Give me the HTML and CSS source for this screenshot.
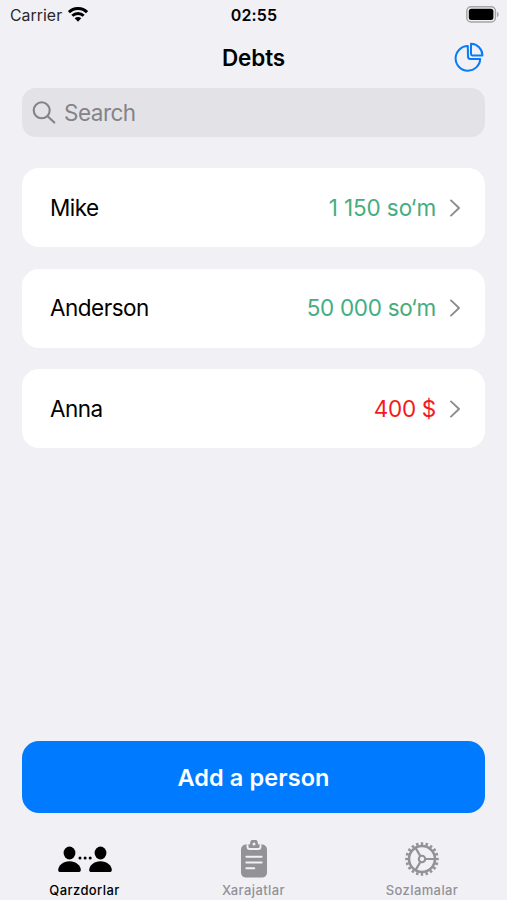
FILE: index.html
```html
<!DOCTYPE html>
<html lang="uz">
<head>
<meta charset="utf-8">
<meta name="viewport" content="width=device-width, initial-scale=1">
<title>Debts</title>
<link rel="stylesheet" href="styles.css">
</head>
<body>
<div class="app">
  <header class="status">
    <div class="carrier"><span>Carrier</span>
      <svg class="wifi" viewBox="0 0 20 15" width="20" height="15"><g fill="none" stroke="#000" stroke-width="2.9"><path d="M.9 5.2a12.9 12.9 0 0 1 18.2 0"/><path d="M4.3 8.8a8.1 8.1 0 0 1 11.4 0"/></g><path d="M6.7 11.3a4.7 4.7 0 0 1 6.6 0L10 14.7Z"/></svg>
    </div>
    <time class="clock">02:55</time>
    <svg class="battery" viewBox="0 0 33 17" width="33" height="17"><rect x=".8" y=".8" width="28.6" height="15.2" rx="4.2" fill="none" stroke="#a5a5a8" stroke-width="1.4"/><rect x="2.8" y="2.8" width="24.6" height="11.2" rx="2.5"/><path d="M31 5.8c2.2.8 2.2 4.4 0 5.2Z" fill="#a5a5a8"/></svg>
  </header>
  <nav class="navbar">
    <h1 class="title">Debts</h1>
    <button class="chart" aria-label="Statistics"><svg viewBox="0 0 30 30" width="30" height="30" fill="none" stroke="#087cf8" stroke-width="2" stroke-linejoin="round"><path d="M13.8 4.1a12.3 12.3 0 1 0 12.4 12.8h-9.8a2.4 2.4 0 0 1-2.4-2.4Z"/><path d="M17 1.8a11.7 11.7 0 0 1 11.4 11.6H18.4A1.4 1.4 0 0 1 17 12Z"/></svg></button>
  </nav>
  <div class="search">
    <svg viewBox="0 0 24 24" width="24" height="24" fill="none" stroke="#838388" stroke-width="2.1" stroke-linecap="round"><circle cx="9.7" cy="9.3" r="8"/><path d="m15.6 15.2 6.700 6.400"/></svg>
    <span>Search</span>
  </div>
  <main class="list">
    <article class="card"><span class="name">Mike</span><span class="amount first">1 150 so‘m</span><svg class="chevron" viewBox="0 0 10 18" width="10" height="18"><path d="m1 1.4 8 7.6-8 7.6"/></svg></article>
    <article class="card"><span class="name">Anderson</span><span class="amount">50 000 so‘m</span><svg class="chevron" viewBox="0 0 10 18" width="10" height="18"><path d="m1 1.4 8 7.6-8 7.6"/></svg></article>
    <article class="card"><span class="name">Anna</span><span class="amount owed">400 $</span><svg class="chevron" viewBox="0 0 10 18" width="10" height="18"><path d="m1 1.4 8 7.6-8 7.6"/></svg></article>
  </main>
  <button class="add">Add a person</button>
  <footer class="tabs">
    <a class="tab active"><svg viewBox="0 0 56 40" width="56" height="40"><g fill="currentColor"><ellipse cx="12.500" cy="13" rx="5.9" ry="6.4"/><path d="M1.200 30c0-4.500 5-8.700 11.300-8.700S23.800 25.500 23.800 30c0 1.400-.8 2-2.200 2H3.400c-1.400 0-2.200-.6-2.200-2Z"/><ellipse cx="43.500" cy="13" rx="5.9" ry="6.4"/><path d="M32.200 30c0-4.500 5-8.700 11.300-8.700S54.800 25.500 54.800 30c0 1.400-.8 2-2.200 2H34.400c-1.400 0-2.200-.6-2.200-2Z"/><circle cx="23" cy="18" r="1.500"/><circle cx="28.100" cy="18" r="1.500"/><circle cx="33.200" cy="18" r="1.500"/></g></svg><span>Qarzdorlar</span></a>
    <a class="tab"><svg viewBox="0 0 30 40" width="30" height="40"><path fill="currentColor" d="M7 4.500h3c.6 0 1.100-.5 1.100-1.100a3.900 3.900 0 0 1 7.800 0c0 .6.500 1.100 1.100 1.100h3a5 5 0 0 1 5 5v23.100a5 5 0 0 1-5 5H7a5 5 0 0 1-5-5V9.500a5 5 0 0 1 5-5Z"/><path d="M8.500 5.300v1.400c0 1.600.8 2.300 2.300 2.300h8.400c1.500 0 2.300-.7 2.300-2.300V5.300M7.300 16.700h15.400M7.300 22.500h15.400M7.300 28.300h8" fill="none" stroke="#f1f0f5" stroke-width="1.900" stroke-linecap="round"/><circle cx="15" cy="4" r="1.500" fill="#f1f0f5"/></svg><span>Xarajatlar</span></a>
    <a class="tab last"><svg viewBox="0 0 36 40" width="36" height="40"><g fill="none" stroke="currentColor"><circle cx="18" cy="19" r="15.300" stroke-width="3" pathLength="100" stroke-dasharray="2.500 2.500" stroke-dashoffset="1.250"/><circle cx="18" cy="19" r="13" stroke-width="2.600"/><circle cx="18" cy="19" r="3.200" stroke-width="2.100"/><path d="M21 19h10.300M16.500 16.400l-5.200-9M16.500 21.600l-5.200 9" stroke-width="2.200"/></g></svg><span>Sozlamalar</span></a>
  </footer>
</div>
</body>
</html>
```
FILE: styles.css
```css
* { box-sizing: border-box; }
body { margin: 0; background: #f1f0f5; color: #000; font-family: Inter, "Liberation Sans", sans-serif; }
button { border: 0; padding: 0; font: inherit; }
svg { display: block; flex: none; }
.app { height: 900px; display: flex; flex-direction: column; overflow: hidden; }
.status { height: 30px; display: grid; grid-template-columns: 1fr auto 1fr; align-items: center; padding: 0 8px 1px 10px; }
.carrier { display: flex; align-items: center; gap: 6px; font-size: 15.800px; letter-spacing: .05px; color: #28282a; }
.carrier span { padding-top: 1px; }
.wifi { margin-top: -1px; }
.clock { font-size: 16px; font-weight: 600; letter-spacing: .2px; margin-right: 1px; }
.battery { justify-self: end; margin-top: -1px; }
.navbar { height: 58px; display: grid; grid-template-columns: 1fr auto 1fr; align-items: center; padding: 0 23px; }
.title { grid-column: 2; margin: -3px 0 0; font-size: 22.500px; font-weight: 600; letter-spacing: -.1px; }
.chart { justify-self: end; background: none; margin-top: -4px; }
.search { height: 49px; margin: 0 22px; padding-left: 10px; display: flex; align-items: center; gap: 8px; border-radius: 14px; background: #e3e2e7; color: #838388; font-size: 22.500px; letter-spacing: -.5px; }
.list { flex: 1; display: flex; flex-direction: column; gap: 21.500px; padding: 31px 22px 0; }
.card { height: 79px; flex: none; display: flex; align-items: center; padding: 0 25px 0 28px; border-radius: 17px; background: #fff; font-size: 22.500px; }
.card span { margin-top: -1px; }
.name { letter-spacing: -.5px; }
.amount { margin-left: auto; color: #45ad7e; letter-spacing: -.3px; }
.first { letter-spacing: -.1px; }
.owed { color: #f5191f; }
.chevron { margin-left: 14px; fill: none; stroke: #8c8c8f; stroke-width: 1.900; stroke-linecap: round; stroke-linejoin: round; }
.add { height: 72px; flex: none; margin: 0 22px; padding-top: 1px; border-radius: 17px; background: #007aff; color: #fff; font-size: 23.500px; font-weight: 600; letter-spacing: .1px; }
.tabs { height: 87.500px; flex: none; display: grid; grid-template-columns: repeat(3, 1fr); padding-top: 27.500px; }
.tab { display: flex; flex-direction: column; align-items: center; color: #929297; font-size: 13px; font-weight: 500; letter-spacing: .4px; line-height: 16px; }
.tab span { margin-top: 2px; }
.last { padding-right: 1px; }
.active { color: #000; }
```
